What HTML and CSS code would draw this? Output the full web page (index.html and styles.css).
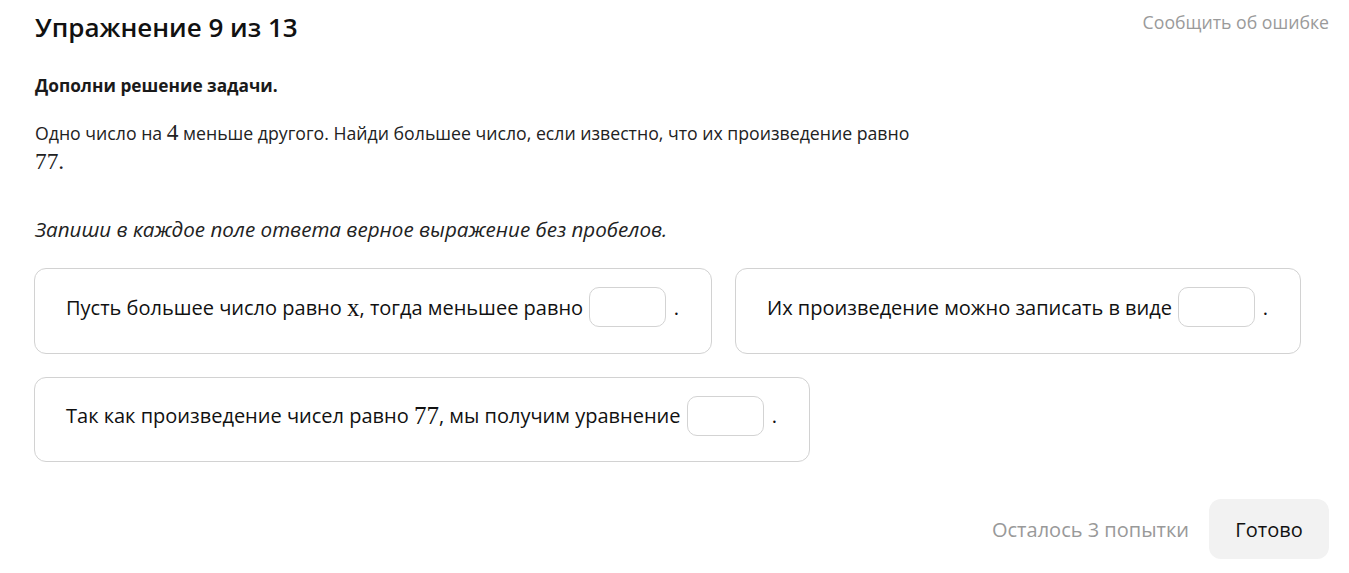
FILE: index.html
```html
<!DOCTYPE html>
<html lang="ru">
<head>
<meta charset="utf-8">
<title>Упражнение 9 из 13</title>
<link rel="stylesheet" href="styles.css">
</head>
<body>
<div class="page">
  <header class="top">
    <h1 class="title">Упражнение 9 из 13</h1>
    <a class="report" href="#">Сообщить об ошибке</a>
  </header>
  <p class="task">Дополни решение задачи.</p>
  <p class="problem">Одно число на <span class="math big">4</span> меньше другого. Найди большее число, если известно, что их произведение равно<br><span class="math big">77.</span></p>
  <p class="hint">Запиши в каждое поле ответа верное выражение без пробелов.</p>
  <div class="cards">
    <div class="row">
      <div class="card c1">Пусть большее число равно <span class="math">x</span>, тогда меньшее равно <span class="field"></span><span class="dot">.</span></div>
      <div class="card c2">Их произведение можно записать в виде <span class="field"></span><span class="dot">.</span></div>
    </div>
    <div class="row">
      <div class="card c3">Так как произведение чисел равно <span class="math">77</span>, мы получим уравнение <span class="field"></span><span class="dot">.</span></div>
    </div>
  </div>
  <footer class="bottom">
    <span class="tries">Осталось 3 попытки</span>
    <button class="done">Готово</button>
  </footer>
</div>
</body>
</html>
```
FILE: styles.css
```css
* { box-sizing: border-box; }
html, body { margin: 0; padding: 0; background: #fff; }
body {
  font-family: "Open Sans", "Noto Sans", sans-serif;
  color: #1a1a1a;
}
.page {
  padding: 10px 20px 0 35px;
}
.top {
  display: flex;
  justify-content: space-between;
  align-items: flex-start;
}
.title {
  margin: -1px 0 0 0;
  font-size: 26px;
  font-weight: 600;
  line-height: 36px;
  color: #111;
}
.report {
  font-size: 17.7px;
  color: #9a9a9a;
  text-decoration: none;
  line-height: 24px;
}
.task {
  margin: 29px 0 0 0;
  font-size: 17.3px;
  font-weight: 700;
  line-height: 24px;
}
.problem {
  margin: 21px 0 0 0;
  font-size: 17.7px;
  line-height: 29px;
  max-width: 900px;
  color: #222;
}
.math {
  font-family: "Liberation Serif", "DejaVu Serif", serif;
  font-size: 1.25em;
  line-height: 1;
}
.math.big { font-size: 1.32em; }
.hint {
  margin: 39px 0 0 0;
  font-size: 20.6px;
  font-style: italic;
  line-height: 26px;
  color: #222;
}
.cards {
  margin-top: 26px;
  display: flex;
  flex-direction: column;
  gap: 23px;
}
.row {
  display: flex;
  gap: 23px;
  margin-left: -1px;
}
.card {
  height: 86px;
  border: 1px solid #d2d2d2;
  border-radius: 12px;
  padding: 0 32px 8px 31px;
  display: flex;
  align-items: center;
  font-size: 20px;
  color: #111;
  white-space: pre;
}
.c1 { width: 678px; }
.c2 { width: 566px; }
.c3 { width: 776px; height: 85px; }
.field {
  display: inline-block;
  width: 80px;
  height: 40px;
  border: 1px solid #d3d3d3;
  border-radius: 10px;
  margin-left: 1px;
}
.dot { margin-left: 8px; }
.bottom {
  margin-top: 37px;
  display: flex;
  justify-content: flex-end;
  align-items: center;
  gap: 20px;
}
.tries {
  font-size: 20px;
  color: #999;
}
.done {
  font-family: inherit;
  font-size: 20px;
  color: #111;
  background: #f2f2f2;
  border: none;
  border-radius: 12px;
  width: 120px;
  height: 60px;
}
```
